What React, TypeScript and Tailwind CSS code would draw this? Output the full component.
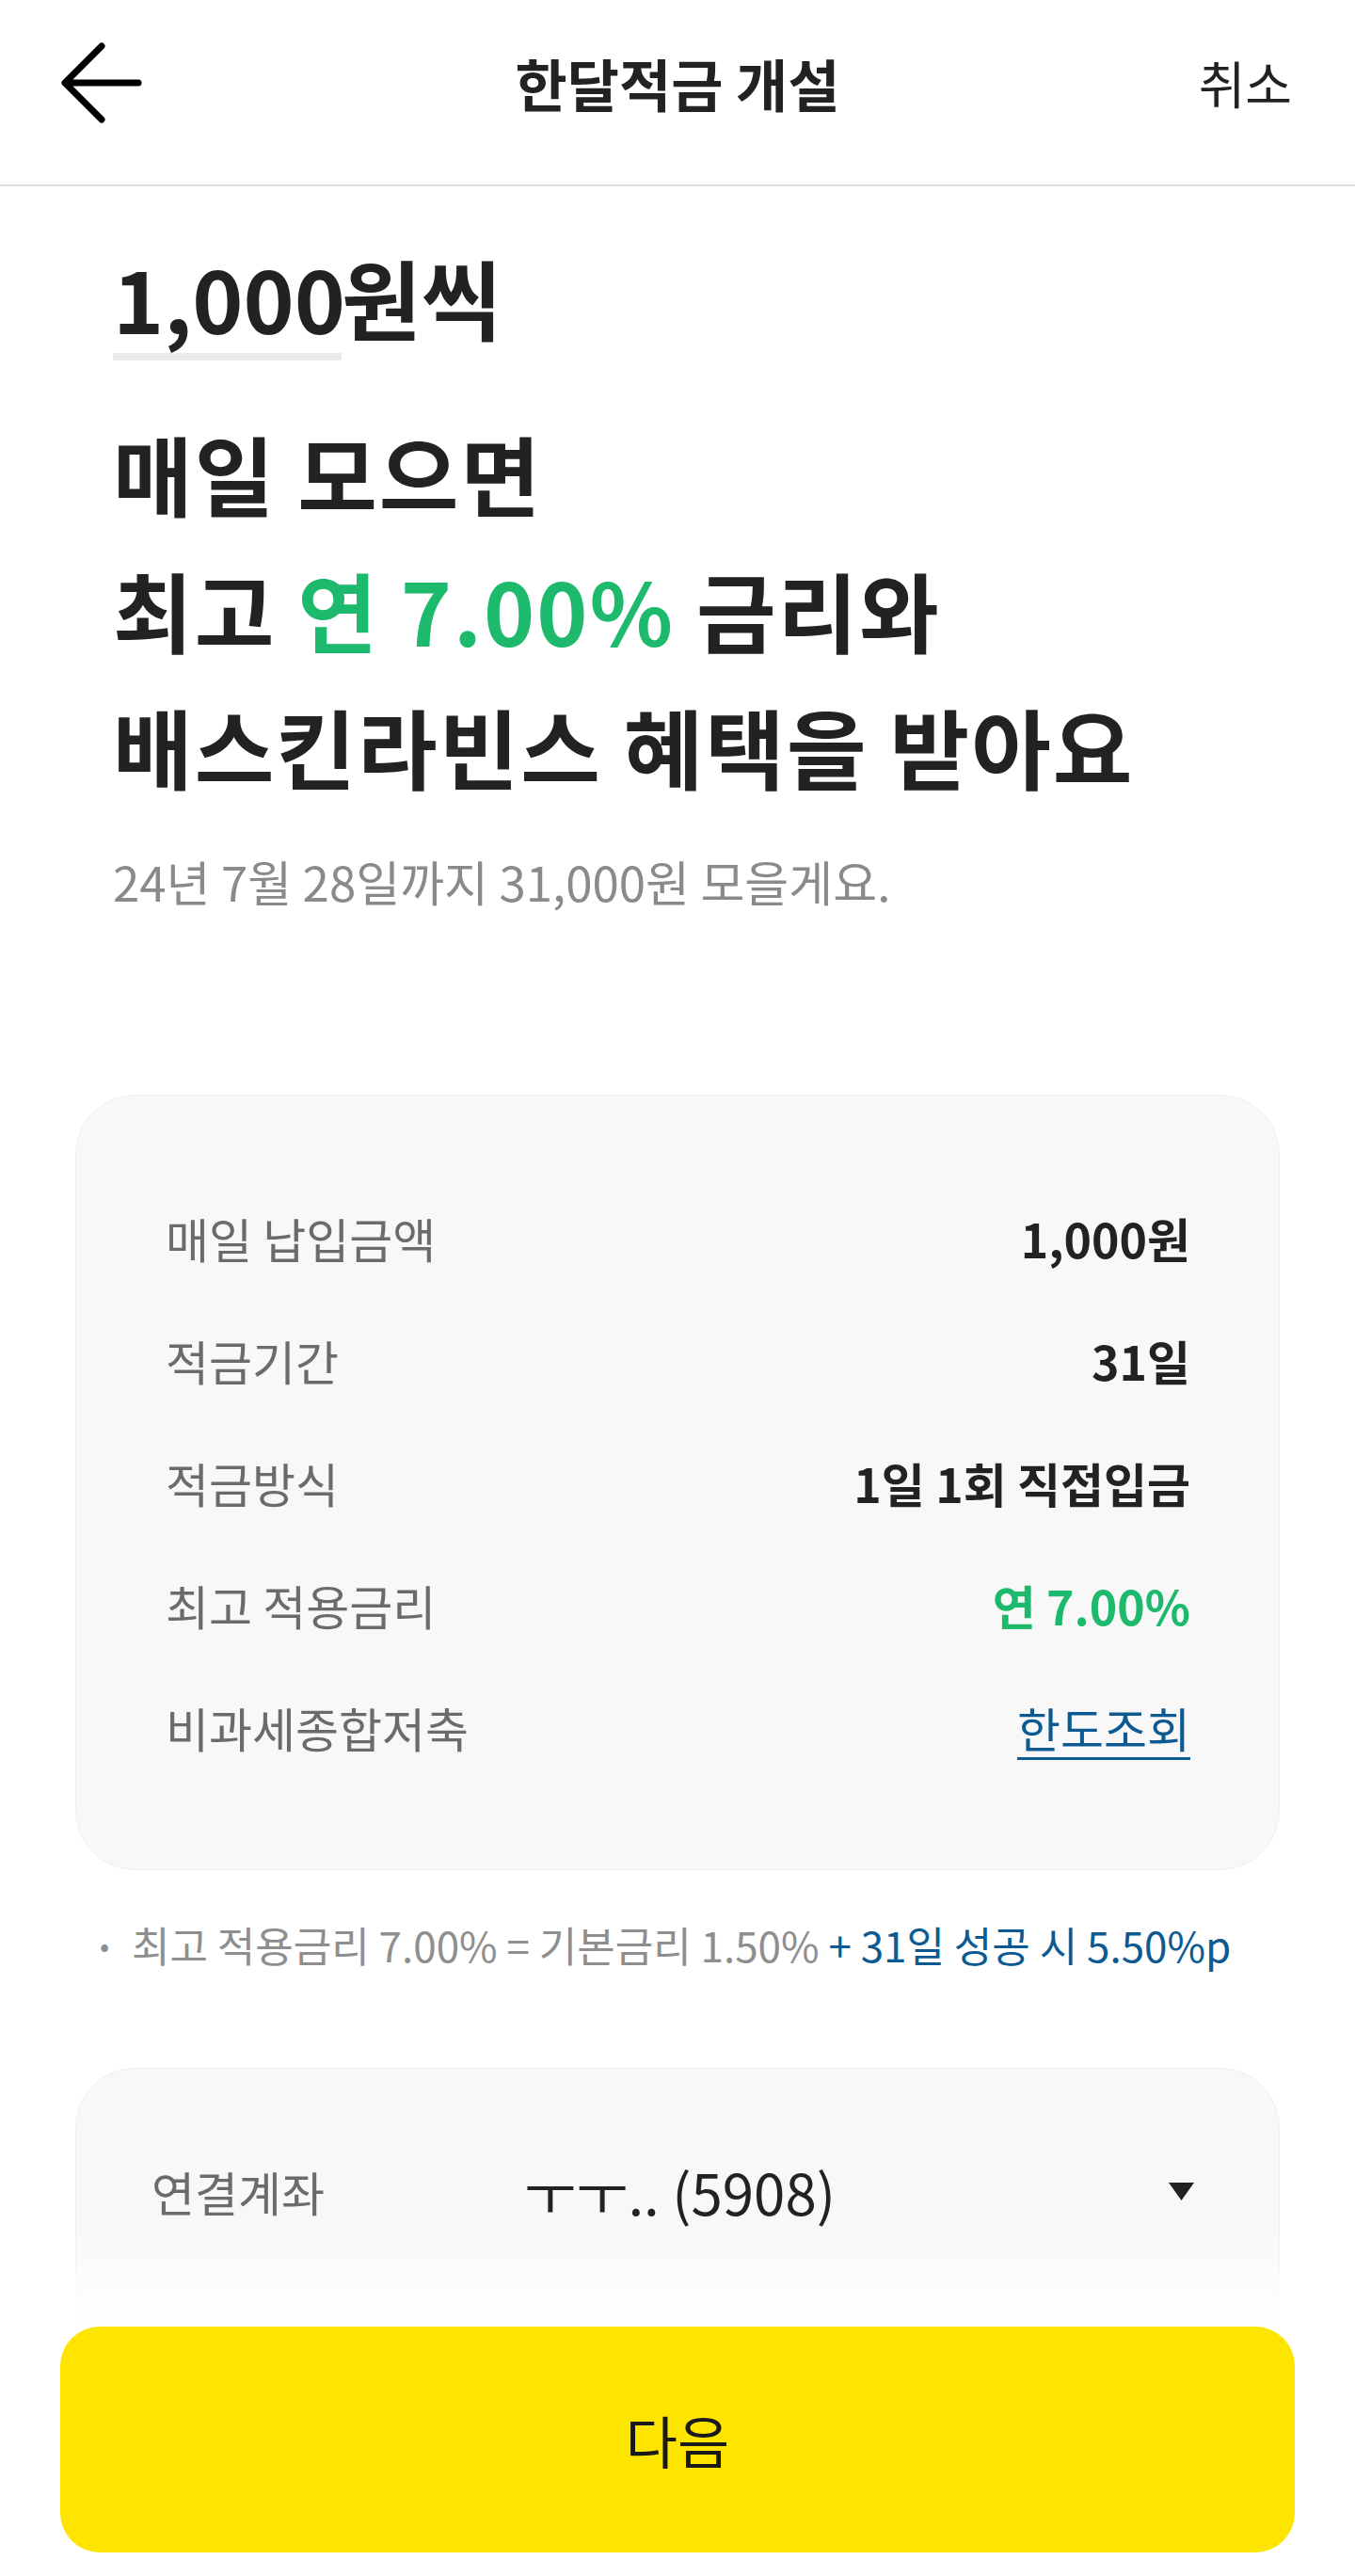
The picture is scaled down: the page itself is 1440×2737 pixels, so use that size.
import React from "react";

const rows: { label: string; value: string; kind: "plain" | "green" | "link" }[] = [
  { label: "매일 납입금액", value: "1,000원", kind: "plain" },
  { label: "적금기간", value: "31일", kind: "plain" },
  { label: "적금방식", value: "1일 1회 직접입금", kind: "plain" },
  { label: "최고 적용금리", value: "연 7.00%", kind: "green" },
  { label: "비과세종합저축", value: "한도조회", kind: "link" },
];

function BackArrow() {
  return (
    <svg width="88" height="88" viewBox="-4 -4 88 88" fill="none">
      <path
        d="M40 1 L1 40 L40 79 M1 40 H79"
        stroke="#000"
        strokeWidth="7"
        strokeLinecap="round"
        strokeLinejoin="round"
      />
    </svg>
  );
}

export default function App() {
  return (
    <div className="relative w-[1440px] h-[2737px] overflow-hidden bg-white font-['Noto_Sans_CJK_KR','Noto_Sans',sans-serif] text-[#222222]">
      {/* Header */}
      <header className="h-[198px] pb-[20px] border-b-2 border-[#dcdcdc] grid grid-cols-[1fr_auto_1fr] items-center">
        <div className="pl-[64px] flex items-center">
          <BackArrow />
        </div>
        <h1 className="text-[60px] font-bold leading-none">한달적금 개설</h1>
        <div className="flex justify-end pr-[67px]">
          <span className="text-[54px] leading-none">취소</span>
        </div>
      </header>

      {/* Title area */}
      <section className="px-[120px] pt-[57px]">
        <div className="flex items-start text-[92px] font-bold leading-[120px]">
          <div className="w-[243px] border-b-8 border-[#ebebeb]">1,000</div>
          <div>원씩</div>
        </div>
        <div className="mt-[46px] text-[92px] font-bold leading-[145px] tracking-[2px]">
          <div>매일 모으면</div>
          <div>
            최고 <span className="text-[#1dba6d]">연 7.00%</span> 금리와
          </div>
          <div>배스킨라빈스 혜택을 받아요</div>
        </div>
        <p className="mt-[42px] text-[51px] leading-[60px] text-[#8a8a8a]">
          24년 7월 28일까지 31,000원 모을게요.
        </p>
      </section>

      {/* Summary card */}
      <section className="px-[80px] mt-[197px]">
        <div className="rounded-[64px] bg-[#f8f8f8] border border-[#efefef] pl-[95px] pr-[94px] py-[86px]">
          {rows.map((r) => (
            <div key={r.label} className="h-[130px] flex items-center justify-between">
              <span className="text-[50px] text-[#6b6b6b]">{r.label}</span>
              {r.kind === "plain" && (
                <span className="text-[50px] font-semibold text-[#222222]">{r.value}</span>
              )}
              {r.kind === "green" && (
                <span className="text-[50px] font-semibold text-[#1dba6d]">{r.value}</span>
              )}
              {r.kind === "link" && (
                <span className="text-[50px] text-[#0d5a92] underline decoration-[3px] underline-offset-[10px]">
                  {r.value}
                </span>
              )}
            </div>
          ))}
        </div>
      </section>

      {/* Footnote */}
      <p className="mt-[51px] pl-[106px] text-[44px] leading-[56px] text-[#8e8e8e] flex items-center">
        <span className="w-[34px] text-[30px]">•</span>
        <span>
          최고 적용금리 7.00% = 기본금리 1.50%{" "}
          <span className="text-[#0d5a92]">+ 31일 성공 시 5.50%p</span>
        </span>
      </p>

      {/* Linked account card */}
      <section className="px-[80px] mt-[103px]">
        <div className="h-[520px] rounded-[64px] bg-[#f8f8f8] border border-[#efefef] pl-[80px] pr-[90px] pt-[68px]">
          <div className="h-[124px] flex items-center">
            <span className="w-[396px] text-[50px] text-[#6b6b6b]">연결계좌</span>
            <span className="flex-1 text-[60px] text-[#222222]">ㅜㅜ.. (5908)</span>
            <svg width="27" height="19" viewBox="0 0 27 19">
              <polygon points="0,0 27,0 13.5,19" fill="#222222" />
            </svg>
          </div>
        </div>
      </section>

      {/* Bottom fixed button with fade */}
      <div className="absolute left-0 right-0 bottom-0">
        <div className="h-[110px] bg-linear-to-b from-white/0 to-white" />
        <div className="bg-white px-[64px] pb-[25px]">
          <button className="w-full h-[240px] rounded-[42px] bg-[#fee500] text-[60px] text-[#191919] flex items-center justify-center">
            다음
          </button>
        </div>
      </div>
    </div>
  );
}
